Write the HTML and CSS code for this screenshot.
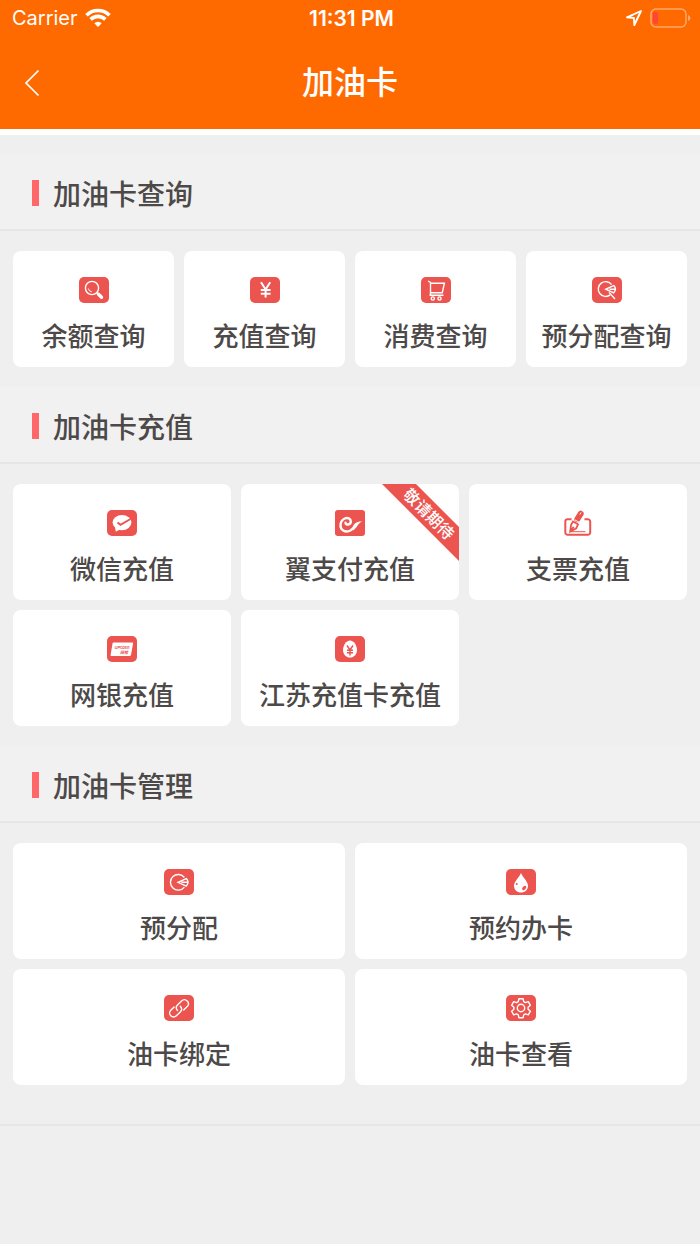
FILE: index.html
```
<!DOCTYPE html>
<html lang="zh-CN">

<head>
    <meta charset="UTF-8">
    <meta name="viewport" content="width=device-width, initial-scale=1.0">
    <title>加油卡</title>
    <link rel="stylesheet" href="styles.css">
</head>

<body>
    <header class="header">
        <div class="status-bar">
            <div class="status-left">
                <span>Carrier</span>
                <svg width="26" height="20" viewBox="0 0 26 20" fill="none" stroke="#fff" stroke-width="3.6">
                    <path d="M1.5 7.2a16.3 16.3 0 0 1 23 0" />
                    <path d="M5.6 11.4a10.5 10.5 0 0 1 14.8 0" />
                    <path d="M13 19l-3.7-3.7a5.2 5.2 0 0 1 7.4 0z" fill="#fff" stroke="none" />
                </svg>
            </div>
            <span class="status-time">11:31 PM</span>
            <div class="status-right">
                <svg width="18" height="18" viewBox="0 0 18 18" fill="none" stroke="#fff" stroke-width="1.9" stroke-linejoin="round">
                    <path d="M16 2L2 8.3l6.9.7.4 7z" />
                </svg>
                <svg width="41" height="20" viewBox="0 0 41 20">
                    <rect x="1" y="1" width="35" height="18" rx="5" fill="none" stroke="#ffa869" stroke-width="1.5" />
                    <rect x="3" y="4" width="5" height="12" rx="2" fill="#ff453a" />
                    <path d="M38 7q2.500 1 2.500 3T38 13z" fill="#ffa869" />
                </svg>
            </div>
        </div>
        <div class="nav-bar">
            <button class="back-btn" type="button" aria-label="返回">
                <svg width="16" height="28" viewBox="0 0 16 28" fill="none" stroke="#fff" stroke-width="1.7">
                    <path d="M14.5 1.5L2 14l12.5 12.5" />
                </svg>
            </button>
            <h1>加油卡</h1>
        </div>
    </header>

    <main class="content">
        <section class="section">
            <h2>加油卡查询</h2>
            <div class="grid grid-4">
                <a class="card" href="#">
                    <svg class="icon" viewBox="0 0 30 26">
                        <rect width="30" height="26" rx="5" />
                        <g class="line">
                            <circle cx="13" cy="11" r="6.6" />
                            <path d="M9.3 11.5a4 4 0 0 0 3.5 3.3" stroke-width="1" />
                            <path d="M17.7 15.8l2 1.8" />
                            <path d="M19.5 17.3l3 2.9" stroke-width="3.4" stroke-linecap="round" />
                        </g>
                    </svg>
                    <span>余额查询</span>
                </a>
                <a class="card" href="#">
                    <svg class="icon" viewBox="0 0 30 26">
                        <rect width="30" height="26" rx="5" />
                        <path class="line" stroke-width="2" d="M11 5.3l4.6 7.2 4.6-7.2M15.6 12v8.6M10.8 13h9.8M10.8 16.7h9.8" />
                    </svg>
                    <span>充值查询</span>
                </a>
                <a class="card" href="#">
                    <svg class="icon" viewBox="0 0 30 26">
                        <rect width="30" height="26" rx="5" />
                        <g class="line">
                            <path d="M7 4l2.500 1.300V18M9.800 6.200h13.600l-2.100 9.500H9.800M8.500 18.200h14" />
                            <circle cx="11.800" cy="21.500" r="1.600" />
                            <circle cx="18.500" cy="21.500" r="1.600" />
                        </g>
                    </svg>
                    <span>消费查询</span>
                </a>
                <a class="card" href="#">
                    <svg class="icon" viewBox="0 0 30 26">
                        <rect width="30" height="26" rx="5" />
                        <g class="line">
                            <path d="M19.600 7.600a7.400 7.400 0 1 0-1.400 10.300" />
                            <path d="M13.800 12.200l8-3.600q3.400 3.400-.2 7.400zM17.500 12.200l5.600-.2" />
                            <path d="M17 15.400l6 6.600" />
                        </g>
                    </svg>
                    <span>预分配查询</span>
                </a>
            </div>
        </section>

        <section class="section">
            <h2>加油卡充值</h2>
            <div class="grid grid-3">
                <a class="card" href="#">
                    <svg class="icon" viewBox="0 0 30 26">
                        <rect width="30" height="26" rx="5" />
                        <ellipse class="solid" cx="15" cy="12.6" rx="9.4" ry="7.6" />
                        <path class="solid" d="M8 17l.8 4.8 4-2.4z" />
                        <path class="cut" stroke-width="2" d="M10.5 12.5l3 2.4L23.5 9" />
                    </svg>
                    <span>微信充值</span>
                </a>
                <a class="card" href="#">
                    <svg class="icon" viewBox="0 0 30 26">
                        <rect width="30" height="26" rx="3" />
                        <path class="line" stroke-width="2.4" stroke-linecap="round" d="M10.5 12.7c0 2.8 5.2 2.3 5.3-1 .1-3.2-3.2-4.5-6-3.2-5 2.2-5.8 9.4-1.4 12.1 4.8 2.7 9.8-1 12.2-5.6" />
                        <path class="solid" d="M17.2 18.5c1.3-4.7 4.4-7.3 10.3-6.9-4.4 1-5.1 6.3-9.4 8.8z" />
                    </svg>
                    <span>翼支付充值</span>
                    <span class="ribbon">敬请期待</span>
                </a>
                <a class="card" href="#">
                    <svg class="icon" viewBox="0 0 30 26">
                        <g class="cut" stroke-width="2">
                            <path d="M8.5 9.2H4.7a2.4 2.4 0 0 0-2.4 2.4v10.8a2.4 2.4 0 0 0 2.4 2.4h20.1a2.4 2.4 0 0 0 2.4-2.4V11.6a2.4 2.4 0 0 0-2.4-2.4h-3.3" />
                            <path stroke-width="1" d="M8 21.7h14.5" />
                            <path stroke-width="1.8" d="M10 11.5l5 2.8-1.8 4-6 3.4.8-6.6zM7.5 21.2l3.2-4.4" />
                            <path stroke-width="6" stroke-linecap="round" d="M14.3 9.3l3.400-5.600" />
                        </g>
                        <path class="line" stroke-width="1" d="M11.800 9.800l4.800 2.800M18 2.500l-1.200 2" />
                    </svg>
                    <span>支票充值</span>
                </a>
                <a class="card" href="#">
                    <svg class="icon" viewBox="0 0 30 26">
                        <rect width="30" height="26" rx="5" />
                        <path class="solid" d="M6.5 6.5h18.800q1 0 .8 1L24 19q-.2 1-1.200 1H4.400q-1 0-.8-1L5.500 7.500q.2-1 1-1z" />
                        <text class="tiny" x="7.500" y="12.500">UPcash</text>
                        <text class="tiny" x="13" y="17.500">网银</text>
                    </svg>
                    <span>网银充值</span>
                </a>
                <a class="card" href="#">
                    <svg class="icon" viewBox="0 0 30 26">
                        <rect width="30" height="26" rx="5" />
                        <path class="solid" d="M15 4.500c3.800 0 7 5.200 7 9.400s-3.100 7.600-7 7.600-7-3.400-7-7.600 3.200-9.400 7-9.400z" />
                        <path class="cut" stroke-width="1.400" d="M12 9.500l3 4.500 3-4.500M15 13.500v6M12 14.200h6M12 16.800h6" />
                    </svg>
                    <span>江苏充值卡充值</span>
                </a>
            </div>
        </section>

        <section class="section">
            <h2>加油卡管理</h2>
            <div class="grid grid-2">
                <a class="card" href="#">
                    <svg class="icon" viewBox="0 0 30 26">
                        <rect width="30" height="26" rx="5" />
                        <g class="line">
                            <path d="M20.400 8.500a7.800 7.800 0 1 0 0 9.600" />
                            <path d="M14 13.300l8.300-3.800q3.600 3.800 0 7.600zM17.500 13.300h6" />
                        </g>
                    </svg>
                    <span>预分配</span>
                </a>
                <a class="card" href="#">
                    <svg class="icon" viewBox="0 0 30 26">
                        <rect width="30" height="26" rx="5" />
                        <path class="solid" d="M15 4c2.5 5.4 7 8.6 7 13 0 3.8-3.1 6.5-7 6.5s-7-2.7-7-6.5C8 12.6 12.5 9.4 15 4z" />
                        <ellipse class="hole" cx="18.2" cy="19" rx="1.6" ry="2.6" transform="rotate(40 18.2 19)" />
                        <circle class="hole" cx="10.7" cy="15" r="1" />
                    </svg>
                    <span>预约办卡</span>
                </a>
                <a class="card" href="#">
                    <svg class="icon" viewBox="0 0 30 26">
                        <rect width="30" height="26" rx="5" />
                        <g class="line" stroke-linecap="round">
                            <path d="M13.5 15.5c-1.7-1.9-1.5-4 0-5.500l4-4c1.800-1.700 4.200-1.500 5.700 0s1.600 3.900 0 5.600l-3.500 3.400" />
                            <path d="M16.3 11.2c1.700 1.800 1.600 4.100 0 5.700l-3.900 3.800c-1.700 1.700-4.100 1.600-5.600.1s-1.600-3.900 0-5.500l3.300-3.400" />
                        </g>
                    </svg>
                    <span>油卡绑定</span>
                </a>
                <a class="card" href="#">
                    <svg class="icon" viewBox="0 0 30 26">
                        <rect width="30" height="26" rx="5" />
                        <g class="line" stroke-linejoin="round">
                            <circle cx="15" cy="13" r="3.7" />
                            <path d="M12.9 3.7h4.2l.6 3 1.7 1 2.9-1 2.1 3.6-2.3 2v1.9l2.3 2-2.1 3.6-2.900-1-1.700 1-.6 2.900h-4.200l-.6-2.900-1.700-1-2.900 1-2.100-3.600 2.300-2v-1.900l-2.300-2 2.100-3.600 2.900 1 1.700-1z" />
                        </g>
                    </svg>
                    <span>油卡查看</span>
                </a>
            </div>
        </section>
    </main>
</body>

</html>
```
FILE: styles.css
```
* {
    box-sizing: border-box;
}

body {
    margin: 0;
    background-color: #efefef;
    color: #4d4948;
    font-family: Inter, "Noto Sans CJK SC", sans-serif;
}

h1,
h2 {
    margin: 0;
    font-weight: 500;
}

.header {
    background-color: #ff6a00;
    color: white;
    border-bottom: 6px solid white;
}

.status-bar {
    display: grid;
    grid-template-columns: 1fr auto 1fr;
    align-items: center;
    height: 36px;
    padding: 0 9px 0 12px;
    font-size: 20px;
}

.status-left,
.status-right {
    display: flex;
    align-items: center;
    gap: 7px;
}

.status-right {
    justify-content: flex-end;
}

.status-time {
    font-size: 21px;
    font-weight: 600;
}

.nav-bar {
    display: grid;
    grid-template-columns: 64px 1fr 64px;
    align-items: center;
    height: 93px;
}

.nav-bar h1 {
    font-size: 32px;
    line-height: 48px;
    text-align: center;
}

.back-btn {
    display: flex;
    padding: 10px 24px;
    border: none;
    background: none;
    cursor: pointer;
}

.content {
    padding: 19px 0;
    border-bottom: 2px solid #e6e6e6;
}

.section h2 {
    display: flex;
    align-items: center;
    gap: 14px;
    height: 77px;
    padding-top: 2px;
    padding-left: 32px;
    background-color: #f1f1f1;
    border-bottom: 2px solid #e6e6e6;
    font-size: 28px;
}

.section h2::before {
    content: "";
    width: 7px;
    height: 26px;
    background-color: #ff6769;
}

.grid {
    display: grid;
    gap: 10px;
    padding: 20px 13px;
}

.grid-4 {
    grid-template-columns: repeat(4, 1fr);
}

.grid-3 {
    grid-template-columns: repeat(3, 1fr);
}

.grid-2 {
    grid-template-columns: repeat(2, 1fr);
}

.card {
    position: relative;
    display: flex;
    flex-direction: column;
    align-items: center;
    gap: 14px;
    padding: 26px 0 10px;
    background-color: white;
    border-radius: 8px;
    overflow: hidden;
    color: inherit;
    font-size: 26px;
    font-weight: 500;
    line-height: 40px;
    text-decoration: none;
    white-space: nowrap;
}

/* corner ribbon */
.ribbon {
    position: absolute;
    top: 18px;
    right: -30px;
    width: 120px;
    background-color: #eb544f;
    color: white;
    font-size: 16px;
    line-height: 24px;
    text-align: center;
    transform: rotate(45deg);
}

.icon {
    width: 30px;
    height: 26px;
    overflow: visible;
}

.icon rect,
.icon .hole {
    fill: #eb544f;
}

.icon .line {
    fill: none;
    stroke: white;
}

.icon g.line {
    stroke-width: 1.4;
}

.icon .solid {
    fill: white;
}

.icon .cut {
    fill: none;
    stroke: #eb544f;
}

.icon .tiny {
    fill: #eb544f;
    font-size: 4px;
    font-style: italic;
    font-weight: 700;
}
```
